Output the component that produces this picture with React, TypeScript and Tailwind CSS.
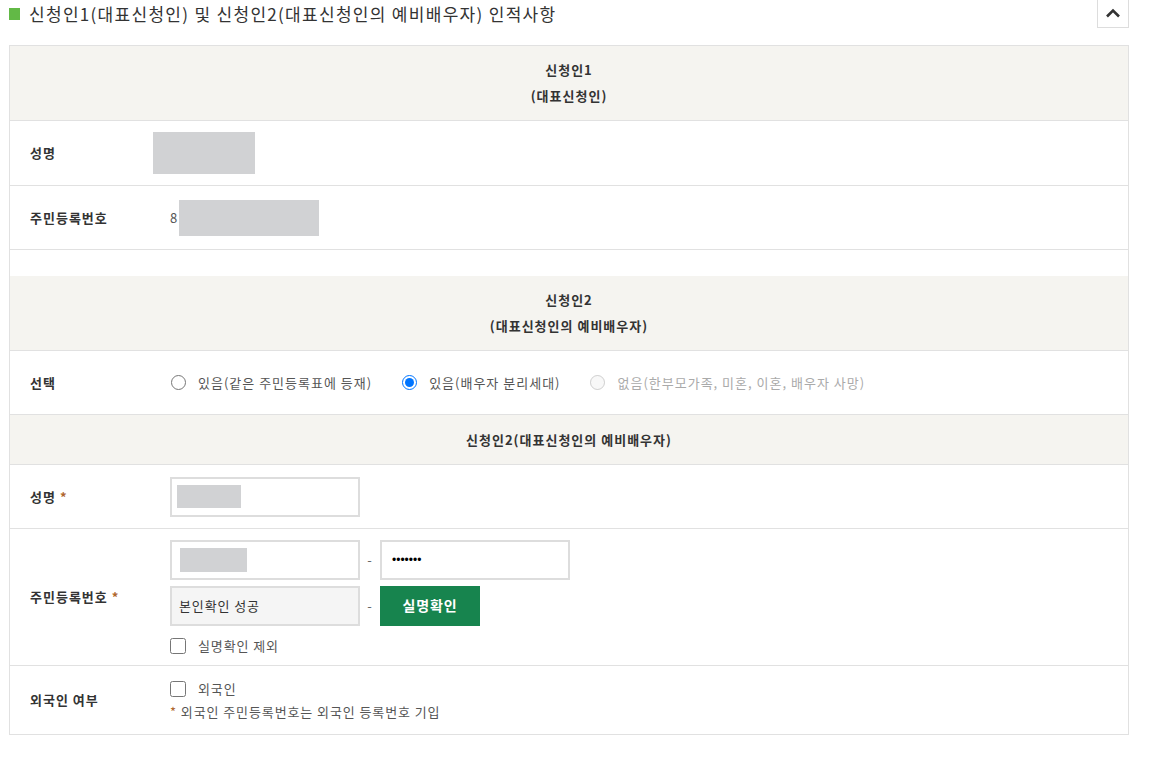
import React from "react"

const font = { fontFamily: '"Malgun Gothic", "Noto Sans CJK KR", "Noto Sans", sans-serif' }

function HeadRow({ lines, h }: { lines: string[]; h: string }) {
  return (
    <div className={`flex flex-col items-center justify-center border-b border-[#e1e1e1] bg-[#f5f4f0] text-[13px] font-bold leading-[26px] tracking-[1px] text-[#333] ${h}`}>
      {lines.map((l) => (
        <div key={l}>{l}</div>
      ))}
    </div>
  )
}

function Row({ label, required, h, last, children }: { label: string; required?: boolean; h: string; last?: boolean; children: React.ReactNode }) {
  return (
    <div className={`flex items-center ${last ? "" : "border-b border-[#e1e1e1]"} ${h}`}>
      <div className="w-[160px] shrink-0 pl-5 text-[13px] font-bold tracking-[1px] text-[#333]">
        {label}
        {required && <span className="ml-1 text-[#b0662e]">*</span>}
      </div>
      <div className="flex-1 tracking-[0.9px]">{children}</div>
    </div>
  )
}

function Redact({ w, h }: { w: string; h: string }) {
  return <div className={`bg-[#d1d2d4] ${w} ${h}`} />
}

function Radio({ label, checked, disabled }: { label: string; checked?: boolean; disabled?: boolean }) {
  return (
    <label className={`flex items-center gap-[12px] text-[13px] tracking-[1px] ${disabled ? "text-[#aaa]" : "text-[#555]"}`}>
      <input type="radio" name="sel" defaultChecked={checked} disabled={disabled} className="m-0 h-[15px] w-[15px]" />
      {label}
    </label>
  )
}

export default function App() {
  return (
    <div className="w-[1152px] bg-white pl-[9px] pr-[23px]" style={font}>
      <div className="flex h-[27px] items-center justify-between">
        <div className="flex items-center gap-[9px]">
          <div className="h-[12px] w-[11px] bg-[#62b946]" />
          <h2 className="text-[17px] tracking-[1.3px] text-[#333]">신청인1(대표신청인) 및 신청인2(대표신청인의 예비배우자) 인적사항</h2>
        </div>
        <button className="flex h-[28px] w-[32px] items-center justify-center border border-t-0 border-[#ddd] bg-white">
          <svg width="16" height="10" viewBox="0 0 16 10" fill="none">
            <path d="M2 8.5 L8 2.5 L14 8.5" stroke="#333" strokeWidth="2.6" />
          </svg>
        </button>
      </div>

      <div className="mt-[18px] border border-[#e1e1e1]">
        <HeadRow lines={["신청인1", "(대표신청인)"]} h="h-[75px]" />
        <Row label="성명" h="h-[65px]">
          <div className="-ml-[17px]">
            <Redact w="w-[102px]" h="h-[42px]" />
          </div>
        </Row>
        <Row label="주민등록번호" h="h-[64px]">
          <div className="flex items-center text-[13px] text-[#555]">
            <span className="w-[9px]">8</span>
            <Redact w="w-[140px]" h="h-[36px]" />
          </div>
        </Row>
        <div className="h-[26px]" />
        <HeadRow lines={["신청인2", "(대표신청인의 예비배우자)"]} h="h-[75px]" />
        <Row label="선택" h="h-[64px]">
          <div className="flex items-center gap-[30px] pl-[1px]">
            <Radio label="있음(같은 주민등록표에 등재)" />
            <Radio label="있음(배우자 분리세대)" checked />
            <Radio label="없음(한부모가족, 미혼, 이혼, 배우자 사망)" disabled />
          </div>
        </Row>
        <HeadRow lines={["신청인2(대표신청인의 예비배우자)"]} h="h-[50px]" />
        <Row label="성명" required h="h-[64px]">
          <div className="flex h-[40px] w-[190px] items-center border-2 border-[#ddd] pl-[5px]">
            <Redact w="w-[64px]" h="h-[23px]" />
          </div>
        </Row>
        <Row label="주민등록번호" required h="h-[137px]">
          <div className="flex flex-col gap-[6px] pt-[1px]">
            <div className="flex items-center">
              <div className="flex h-[40px] w-[190px] items-center border-2 border-[#ddd] pl-[8px]">
                <Redact w="w-[67px]" h="h-[24px]" />
              </div>
              <span className="w-[20px] text-center text-[13px] text-[#666]">-</span>
              <div className="flex h-[40px] w-[190px] items-center border-2 border-[#ddd] pl-[10px] text-[12px] tracking-normal text-black" style={{ fontFamily: '"Liberation Sans", sans-serif' }}>
                •••••••
              </div>
            </div>
            <div className="flex items-center">
              <div className="flex h-[40px] w-[190px] items-center border-2 border-[#ddd] bg-[#f5f5f5] pl-[7px] text-[13px] text-[#333]">
                본인확인 성공
              </div>
              <span className="w-[20px] text-center text-[13px] text-[#666]">-</span>
              <button className="h-[40px] w-[100px] bg-[#17844e] text-[14px] font-bold text-white">실명확인</button>
            </div>
            <label className="mt-[4px] flex items-center gap-[12px] text-[13px] text-[#555]">
              <input type="checkbox" className="m-0 h-[16px] w-[16px]" />
              실명확인 제외
            </label>
          </div>
        </Row>
        <Row label="외국인 여부" h="h-[68px]" last>
          <div className="flex flex-col gap-[3px]">
            <label className="flex items-center gap-[12px] text-[13px] text-[#555]">
              <input type="checkbox" className="m-0 h-[16px] w-[16px]" />
              외국인
            </label>
            <div className="text-[13px] text-[#555]">
              <span className="text-[#b0662e]">*</span> 외국인 주민등록번호는 외국인 등록번호 기입
            </div>
          </div>
        </Row>
      </div>
    </div>
  )
}
